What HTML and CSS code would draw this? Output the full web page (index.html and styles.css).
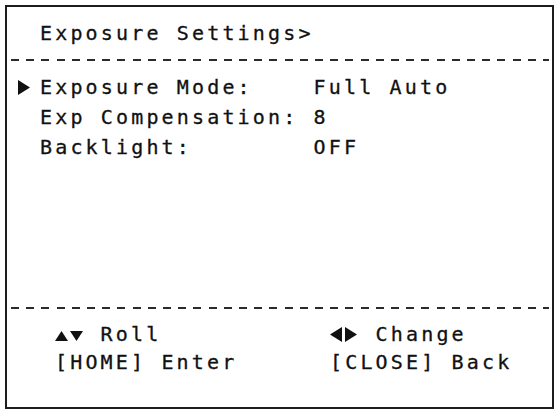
FILE: index.html
```html
<!DOCTYPE html>
<html lang="en">
<head>
    <meta charset="UTF-8">
    <meta name="viewport" content="width=device-width, initial-scale=1.0">
    <title>Exposure Settings</title>
    <link rel="stylesheet" href="styles.css">
</head>
<body>
    <div class="osd">
        <div class="title">Exposure Settings&gt;</div>
        <div class="rule rule-top"></div>

        <div class="menu">
            <div class="row active">
                <svg class="cursor" viewBox="0 0 12 15" width="12" height="15"><polygon points="0,0 12,7.5 0,15"/></svg>
                <span class="label">Exposure Mode:</span>
                <span class="value">Full Auto</span>
            </div>
            <div class="row">
                <svg class="cursor" viewBox="0 0 12 15" width="12" height="15"><polygon points="0,0 12,7.5 0,15"/></svg>
                <span class="label">Exp Compensation:</span>
                <span class="value">8</span>
            </div>
            <div class="row">
                <svg class="cursor" viewBox="0 0 12 15" width="12" height="15"><polygon points="0,0 12,7.5 0,15"/></svg>
                <span class="label">Backlight:</span>
                <span class="value">OFF</span>
            </div>
        </div>

        <div class="rule"></div>

        <div class="footer">
            <div class="hint"><span class="keys"><svg class="updown" viewBox="0 0 28 10" width="28" height="10"><polygon points="0,10 6.5,0 13,10"/><polygon points="15,0 28,0 21.5,10"/></svg></span>Roll</div>
            <div class="hint"><span class="keys"><svg class="leftright" viewBox="0 0 27 15" width="27" height="15"><polygon points="12,0 12,15 0,7.5"/><polygon points="15,0 27,7.5 15,15"/></svg></span>Change</div>
            <div class="hint">[HOME] Enter</div>
            <div class="hint">[CLOSE] Back</div>
        </div>
    </div>
</body>
</html>
```

FILE: styles.css
```css
* {
    margin: 0;
    padding: 0;
    box-sizing: border-box;
}

body {
    background: #fff;
    color: #111;
    font-family: 'DejaVu Sans Mono', 'Liberation Mono', monospace;
    font-size: 20px;
    letter-spacing: 3.16px;
    -webkit-text-stroke: 0.3px #111;
}

/* OSD frame */
.osd {
    width: 549px;
    height: 404px;
    margin: 5px;
    border: 2px solid #1c1c1c;
    display: flex;
    flex-direction: column;
}

.title {
    margin-top: 11px;
    padding-left: 33px;
    line-height: 30px;
    white-space: nowrap;
}

.rule {
    flex: none;
    height: 2px;
    margin: 0 3px 0 4px;
    background: repeating-linear-gradient(to right, #2a2a2a 0 8px, transparent 8px 15.2px);
}

.rule-top {
    margin-top: 11px;
}

.menu {
    flex: 1;
    padding-top: 11px;
}

.row {
    display: flex;
    align-items: center;
    padding-left: 11px;
    line-height: 30px;
    white-space: nowrap;
}

.cursor {
    flex: none;
    margin-right: 10px;
    fill: #111;
    visibility: hidden;
}

.row.active .cursor {
    visibility: visible;
}

.label {
    width: 273.6px;
}

/* key hints */
.footer {
    display: grid;
    grid-template-columns: 275px auto;
    padding: 11px 0 31px 48px;
    line-height: 28px;
    white-space: nowrap;
}

.keys {
    display: inline-block;
    width: 45.6px;
}

.keys svg {
    fill: #111;
}

.updown {
    vertical-align: 0;
}

.leftright {
    vertical-align: -1px;
}
```
